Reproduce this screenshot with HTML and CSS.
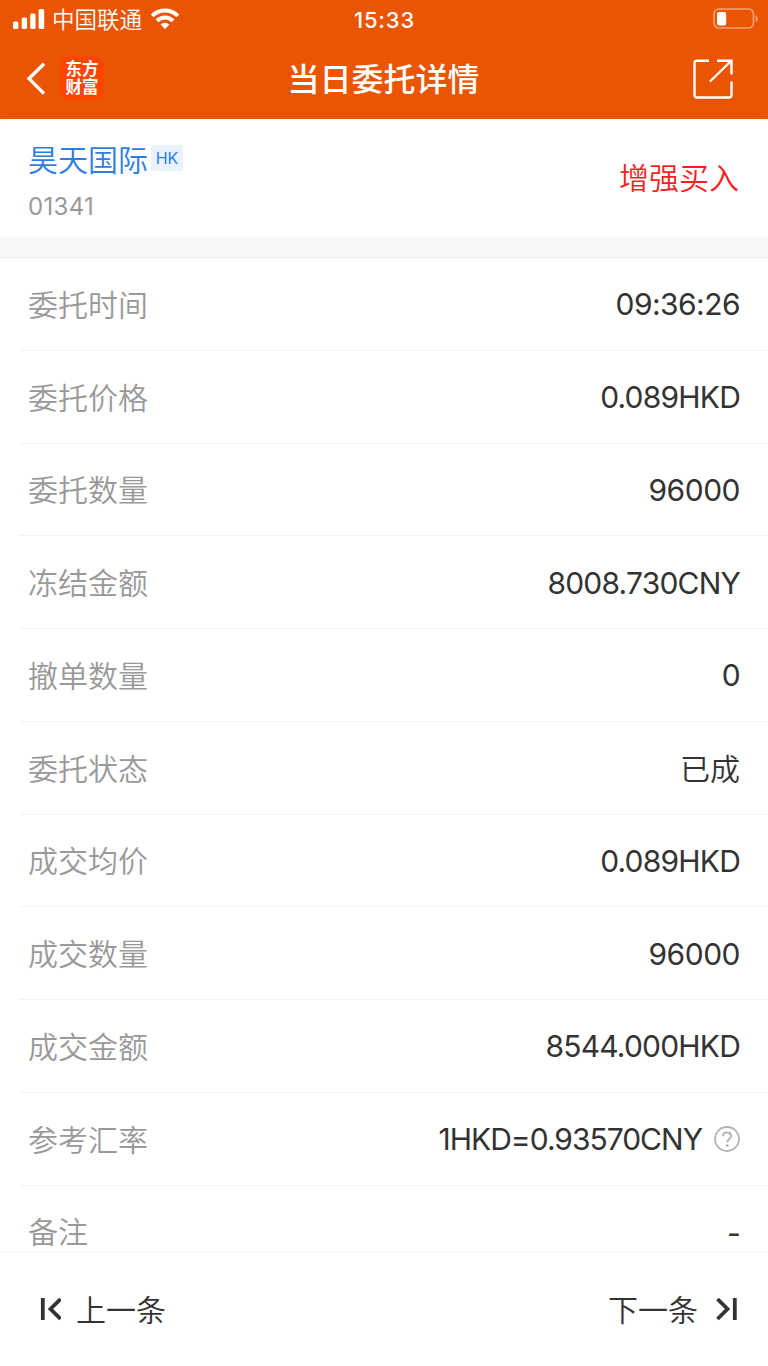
FILE: index.html
```html
<!DOCTYPE html>
<html lang="zh-CN">
<head>
  <meta charset="UTF-8">
  <title>当日委托详情</title>
  <link rel="stylesheet" href="styles.css">
</head>
<body>
  <div class="page">
    <header class="header">
      <div class="status-bar">
        <div class="carrier">
          <svg class="signal" width="32" height="20" viewBox="0 0 32 20" fill="#fff">
            <rect x="0" y="12.5" width="5.4" height="7.5" rx="1.6"/>
            <rect x="8.7" y="8.5" width="5.4" height="11.5" rx="1.6"/>
            <rect x="17.2" y="4.5" width="5.4" height="15.5" rx="1.6"/>
            <rect x="25.6" y="0" width="5.6" height="20" rx="1.6"/>
          </svg>
          <span class="carrier-name">中国联通</span>
          <svg class="wifi" width="30" height="21" viewBox="0 0 30 21">
            <path d="M2.2 7.8a18.2 18.2 0 0 1 25.6 0" fill="none" stroke="#fff" stroke-width="4"/>
            <path d="M7 12.8a11.4 11.4 0 0 1 16 0" fill="none" stroke="#fff" stroke-width="3.8"/>
            <path d="M10.6 16.5a6.3 6.3 0 0 1 8.8 0L15 21z" fill="#fff"/>
          </svg>
        </div>
        <span class="clock">15:33</span>
        <svg class="battery" width="46" height="22" viewBox="0 0 46 22">
          <rect x="1" y="1" width="39.5" height="19" rx="5" fill="none" stroke="#fff" stroke-opacity=".45" stroke-width="1.7"/>
          <rect x="4" y="4" width="9.2" height="13.5" rx="2" fill="#fff"/>
          <path d="M42.7 7a4 4 0 0 1 0 7z" fill="#fff" fill-opacity=".45"/>
        </svg>
      </div>

      <div class="nav-bar">
        <div class="nav-left">
          <svg class="back" width="20" height="34" viewBox="0 0 20 34">
            <path d="M19 1.8L4 16.6l15 15" fill="none" stroke="#fff" stroke-width="3.4"/>
          </svg>
          <div class="logo">
            <span>东方</span>
            <span>财富</span>
          </div>
        </div>
        <h1 class="title">当日委托详情</h1>
        <svg class="share" width="40" height="40" viewBox="0 0 40 40" fill="none" stroke="#fff" stroke-width="2.4">
          <path d="M16 1.7H4A2.5 2.5 0 0 0 1.5 4.2V36A2.5 2.5 0 0 0 4 38.5H36A2.5 2.5 0 0 0 38.5 36V22.5"/>
          <path d="M24 1.7H38.5V15.5M38 2L17 22.5"/>
        </svg>
      </div>
    </header>

    <section class="stock">
      <div class="stock-info">
        <div class="stock-name"><span>昊天国际</span><span class="market">HK</span></div>
        <div class="stock-code">01341</div>
      </div>
      <div class="direction">增强买入</div>
    </section>

    <main class="details">
      <div class="row"><span class="label">委托时间</span><span class="value time">09:36:26</span></div>
      <div class="row"><span class="label">委托价格</span><span class="value">0.089HKD</span></div>
      <div class="row"><span class="label">委托数量</span><span class="value count">96000</span></div>
      <div class="row"><span class="label">冻结金额</span><span class="value">8008.730CNY</span></div>
      <div class="row"><span class="label">撤单数量</span><span class="value">0</span></div>
      <div class="row"><span class="label">委托状态</span><span class="value status">已成</span></div>
      <div class="row"><span class="label">成交均价</span><span class="value">0.089HKD</span></div>
      <div class="row"><span class="label">成交数量</span><span class="value count">96000</span></div>
      <div class="row"><span class="label">成交金额</span><span class="value">8544.000HKD</span></div>
      <div class="row">
        <span class="label">参考汇率</span>
        <span class="value rate">1HKD=0.93570CNY</span>
        <svg class="help" width="26" height="26" viewBox="0 0 26 26" fill="none" stroke="#b3b3b3">
          <circle cx="13" cy="13" r="12" stroke-width="1.8"/>
          <path d="M9 10.2C9 7.6 10.8 6.5 13 6.5S17.1 7.8 17.1 10c0 2.9-3.9 3-3.9 6.4" stroke-width="1.9"/>
          <circle cx="13.2" cy="19.6" r="1.4" fill="#b3b3b3" stroke="none"/>
        </svg>
      </div>
      <div class="row"><span class="label">备注</span><span class="value dash">-</span></div>
    </main>

    <footer class="pager">
      <div class="pager-item">
        <svg width="22" height="24" viewBox="0 0 22 24" fill="none" stroke="#333" stroke-width="3.8">
          <path d="M3.8 1v22M21.5 2l-10 10 10 10"/>
        </svg>
        <span>上一条</span>
      </div>
      <div class="pager-item next">
        <span>下一条</span>
        <svg width="22" height="24" viewBox="0 0 22 24" fill="none" stroke="#333" stroke-width="3.8">
          <path d="M18.8 1v22M1.5 2l10 10-10 10"/>
        </svg>
      </div>
    </footer>
  </div>
</body>
</html>
```
FILE: styles.css
```css
* {
  box-sizing: border-box;
}

body {
  margin: 0;
  background: #fff;
  color: #333;
  font-family: Inter, "Noto Sans CJK SC", sans-serif;
}

svg {
  display: block;
  flex-shrink: 0;
}

.page {
  display: flex;
  flex-direction: column;
  width: 768px;
  height: 1366px;
  overflow: hidden;
  background: #f6f7f9;
}

/* Header */
.header {
  flex-shrink: 0;
  height: 119px;
  background: #ea5504;
  color: #fff;
}

.status-bar {
  display: grid;
  grid-template-columns: 1fr auto 1fr;
  align-items: center;
  height: 38px;
  padding: 0 9px 0 13px;
}

.carrier {
  display: flex;
  align-items: center;
}

.carrier-name {
  margin: 0 8px 0 7px;
  padding-top: 2px;
  font-size: 22.5px;
  font-weight: 350;
  line-height: 36px;
}

.wifi {
  margin-top: -2px;
}

.clock {
  margin-left: -3px;
  padding-top: 1px;
  font-size: 22px;
  font-weight: 500;
  letter-spacing: 0.8px;
}

.battery {
  justify-self: end;
}

.nav-bar {
  display: grid;
  grid-template-columns: 1fr auto 1fr;
  align-items: center;
  height: 81px;
  padding: 0 34px 0 25px;
}

.nav-left {
  display: flex;
  align-items: center;
  gap: 15px;
}

.logo {
  display: flex;
  flex-direction: column;
  align-items: center;
  justify-content: center;
  width: 44px;
  height: 44px;
  margin-top: -2px;
  border-radius: 9px;
  background: #ff4403;
  font-size: 16.5px;
  font-weight: 700;
  line-height: 18px;
}

.title {
  margin: 0 -4px 0 4px;
  padding-top: 2px;
  font-size: 32px;
  font-weight: 500;
  line-height: 40px;
}

.share {
  justify-self: end;
  margin-right: 1px;
}

/* Stock summary */
.stock {
  display: flex;
  flex-shrink: 0;
  justify-content: space-between;
  height: 120px;
  margin-bottom: 18px;
  padding: 20px 29px 0 28px;
  border-bottom: 1px solid #f2f3f4;
  border-radius: 5px 5px 0 0;
  background: #fff;
}

.stock-name {
  display: flex;
  align-items: center;
  height: 40px;
  padding-top: 1px;
  color: #2e7de1;
  font-size: 30px;
  font-weight: 350;
  line-height: 38px;
}

.market {
  width: 32px;
  height: 26px;
  margin-left: 3px;
  margin-top: -3px;
  border-radius: 3px;
  background: #e8f1fc;
  font-size: 16px;
  font-weight: 400;
  line-height: 27px;
  text-align: center;
}

.stock-code {
  margin-top: 12px;
  color: #999;
  font-size: 24px;
  letter-spacing: 0.3px;
  line-height: 31px;
}

.direction {
  padding-top: 19px;
  color: #f81f1f;
  font-size: 30px;
  font-weight: 350;
  line-height: 40px;
}

/* Order details */
.details {
  height: 996px;
  overflow: hidden;
  border-top: 1px solid #ebecee;
  border-bottom: 2px solid #f7f7f7;
  background: #fff;
}

.row {
  display: flex;
  align-items: center;
  height: 92.75px;
  margin-left: 20px;
  padding: 0 28px 0 8px;
  border-bottom: 1px solid #f3f3f3;
}

.label {
  padding-bottom: 2px;
  color: #999;
  font-size: 30px;
  font-weight: 350;
}

.value {
  margin-left: auto;
  padding-top: 1px;
  font-size: 30px;
  letter-spacing: -0.8px;
}

.time {
  letter-spacing: -0.55px;
}

.count {
  letter-spacing: -0.5px;
}

.rate {
  letter-spacing: -1px;
}

.status {
  padding: 0 0 2px;
  font-weight: 350;
  letter-spacing: 0;
}

.dash {
  padding-top: 3px;
}

.help {
  margin-left: 12px;
}

/* Previous / next */
.pager {
  display: flex;
  flex: 1;
  align-items: center;
  justify-content: space-between;
  padding: 0 30px 1px 39px;
  background: #fff;
}

.pager-item {
  display: flex;
  align-items: center;
  gap: 15px;
  font-size: 30px;
  font-weight: 350;
}

.pager-item span {
  padding-bottom: 3px;
}

.next {
  gap: 18px;
}
```
